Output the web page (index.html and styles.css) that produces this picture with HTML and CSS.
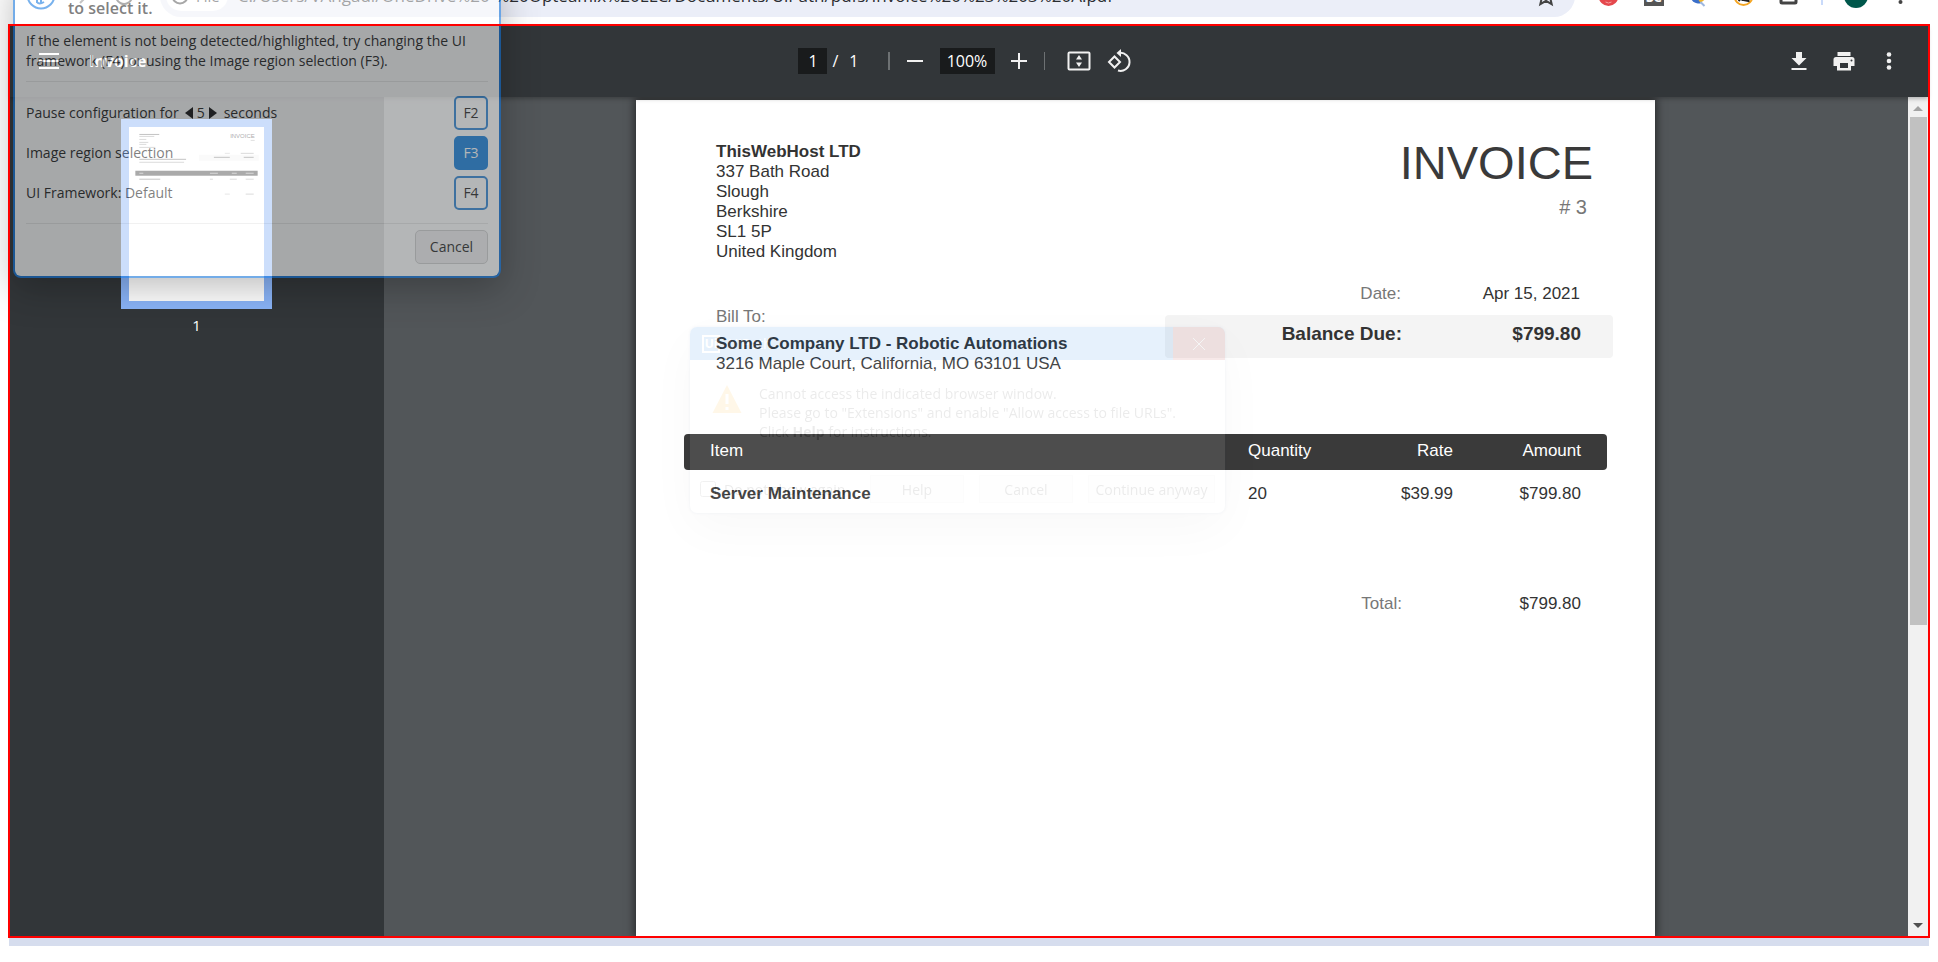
FILE: index.html
```html
<!DOCTYPE html>
<html lang="en">
<head>
<meta charset="utf-8">
<title>Invoice</title>
<link rel="stylesheet" href="styles.css">
</head>
<body>
<header class="browser">
  <div class="nav">
    <svg width="24" height="24" viewBox="0 0 24 24" fill="none" stroke="#777" stroke-width="2"><path d="M4 12h14M12 5l7 7-7 7"/></svg>
    <svg width="24" height="24" viewBox="0 0 24 24" fill="none" stroke="#444" stroke-width="2"><path d="M19 8a8 8 0 1 0 1 5M20 3v6h-6"/></svg>
  </div>
  <div class="omnibox">
    <span class="scheme"><svg width="20" height="20" viewBox="0 0 20 20" fill="none" stroke="#333" stroke-width="2"><circle cx="10" cy="10" r="7.5"/><path d="M10 9v5M10 5.500v1.500"/></svg>File</span>
    <span class="url">C:/Users/VAngadi/OneDrive%20-%20Opteamix%20LLC/Documents/UiPath/pdfs/Invoice%20%23%203%20A.pdf</span>
    <svg class="star" width="24" height="24" viewBox="0 0 24 24" fill="none" stroke="#444" stroke-width="2"><path d="M12 3l2.700 6 6.300.6-4.800 4.200 1.500 6.400-5.700-3.400-5.700 3.400 1.500-6.400L3 9.600 9.300 9z"/></svg>
  </div>
  <div class="extensions">
    <svg width="24" height="24" viewBox="0 0 24 24"><circle cx="12" cy="12" r="10" fill="#e5484d"/><path d="M9 18q3 2 6 0" stroke="#f4a0a0" fill="none"/></svg>
    <span class="se">Se</span>
    <svg width="24" height="24" viewBox="0 0 24 24"><path d="M4 12a8 8 0 0 0 11 7l-2-5z" fill="#3b6fc9"/><path d="M12 16l6-4 1 3-5 4z" fill="#f0b52c"/><path d="M14 18l4 4" stroke="#9db7e0" stroke-width="2"/></svg>
    <svg width="24" height="24" viewBox="0 0 24 24"><circle cx="12" cy="12" r="9" fill="#fff" stroke="#f5a623" stroke-width="2"/><path d="M7 17l4-4v4M12 16q2-4 5-1v2z" stroke="#222" stroke-width="2" fill="none"/></svg>
    <svg width="24" height="24" viewBox="0 0 24 24" fill="none" stroke="#444" stroke-width="3"><rect x="4.500" y="4" width="15" height="15" rx="1"/></svg>
    <i class="divider"></i>
    <span class="avatar">V</span>
    <svg width="24" height="24" viewBox="0 0 24 24" fill="#444"><circle cx="12" cy="6" r="2"/><circle cx="12" cy="12" r="2"/><circle cx="12" cy="18" r="2"/></svg>
  </div>
</header>

<main class="frame">
  <div class="toolbar">
    <div class="tb-left">
      <button class="icon" aria-label="Menu"><svg width="24" height="24" viewBox="0 0 24 24" stroke="#fff" stroke-width="2"><path d="M2 5h20M2 12h20M2 19h20"/></svg></button>
      <h1 class="doc-title">Invoice</h1>
    </div>
    <div class="tb-center">
      <input class="page-no" value="1" aria-label="Page number"><span class="slash">/</span><span class="total-pages">1</span>
      <i class="sep wide"></i>
      <button class="icon minus" aria-label="Zoom out"><svg width="24" height="24" viewBox="0 0 24 24" stroke="#f1f1f1" stroke-width="2"><path d="M4 12h16"/></svg></button>
      <input class="zoom" value="100%" aria-label="Zoom level">
      <button class="icon plus" aria-label="Zoom in"><svg width="24" height="24" viewBox="0 0 24 24" stroke="#f1f1f1" stroke-width="2"><path d="M4 12h16M12 4v16"/></svg></button>
      <i class="sep"></i>
      <button class="icon fit" aria-label="Fit to page"><svg width="24" height="24" viewBox="0 0 24 24" fill="none"><rect x="1.500" y="3.500" width="21" height="17" rx="1" stroke="#f1f1f1" stroke-width="2"/><path d="M9 10.500L12 6l3 4.500zM9 13.500L12 18l3-4.500z" fill="#f1f1f1"/></svg></button>
      <button class="icon rotate" aria-label="Rotate"><svg width="24" height="24" viewBox="0 0 24 24" fill="none" stroke="#f1f1f1" stroke-width="2"><path d="M7.500 7.500L13 13l-5.500 5.500L2 13z"/><path d="M12 4a9 9 0 1 1-1 17.500"/><path d="M14 0l-4.500 4L14 8z" fill="#f1f1f1" stroke="none"/></svg></button>
    </div>
    <div class="tb-right">
      <button class="icon" aria-label="Download"><svg width="24" height="24" viewBox="0 0 24 24" fill="#f1f1f1"><path d="M9 3h6v6h4.500L12 16.500 4.500 9H9zM4.500 19h15v2h-15z"/></svg></button>
      <button class="icon" aria-label="Print"><svg width="24" height="24" viewBox="0 0 24 24" fill="#f1f1f1"><path d="M5.500 3h13v4h-13z"/><path fill-rule="evenodd" d="M4 8h16a2.500 2.500 0 0 1 2.500 2.500V17H19v4.500H5V17H1.500v-6.500A2.500 2.500 0 0 1 4 8zM8 14v5h8v-5zM19.500 10.500a1 1 0 1 0 0 2 1 1 0 0 0 0-2z"/></svg></button>
      <button class="icon" aria-label="More actions"><svg width="24" height="24" viewBox="0 0 24 24" fill="#f1f1f1"><circle cx="12" cy="5.500" r="2.300"/><circle cx="12" cy="12" r="2.300"/><circle cx="12" cy="18.500" r="2.300"/></svg></button>
    </div>
  </div>

  <div class="viewer">
    <aside class="sidebar">
      <figure class="thumb">
        <svg class="thumb-page" viewBox="0 0 135 175" font-family="Liberation Sans, sans-serif">
          <rect width="135" height="175" fill="#fff"/>
          <g fill="#777"><rect x="10" y="7" width="20" height="1"/><rect x="10" y="9" width="15" height="1" opacity=".6"/><rect x="10" y="12" width="7" height="1" opacity=".6"/><rect x="10" y="15" width="9" height="1" opacity=".6"/><rect x="10" y="17" width="7" height="1" opacity=".6"/><rect x="10" y="20" width="16" height="1" opacity=".6"/><rect x="10" y="32" width="47" height="1"/><rect x="10" y="35" width="45" height="1" opacity=".6"/></g>
          <text x="126" y="11" font-size="6" text-anchor="end" fill="#3a3a3a">INVOICE</text>
          <rect x="70" y="28" width="60" height="6" fill="#f4f4f4"/>
          <g fill="#777"><rect x="122" y="13" width="4" height="1" opacity=".5"/><rect x="96" y="26" width="5" height="1" opacity=".4"/><rect x="112" y="26" width="13" height="1" opacity=".6"/><rect x="85" y="30" width="16" height="1"/><rect x="115" y="30" width="10" height="1"/></g>
          <rect x="6" y="44" width="123" height="5" fill="#3a3a3a"/>
          <g fill="#aaa"><rect x="10" y="46" width="4" height="1"/><rect x="81" y="46" width="8" height="1"/><rect x="103" y="46" width="5" height="1"/><rect x="117" y="46" width="8" height="1"/></g>
          <g fill="#777"><rect x="10" y="52" width="21" height="1"/><rect x="81" y="52" width="3" height="1" opacity=".6"/><rect x="101" y="52" width="7" height="1" opacity=".6"/><rect x="117" y="52" width="8" height="1" opacity=".6"/><rect x="96" y="67" width="5" height="1" opacity=".4"/><rect x="117" y="67" width="8" height="1" opacity=".6"/></g>
        </svg>
        <figcaption>1</figcaption>
      </figure>
    </aside>
    <section class="canvas">
      <article class="paper">
        <div class="top">
          <div class="parties">
            <address><b>ThisWebHost LTD</b><br>337 Bath Road<br>Slough<br>Berkshire<br>SL1 5P<br>United Kingdom</address>
            <p class="bill-label">Bill To:</p>
            <address><b>Some Company LTD - Robotic Automations</b><br>3216 Maple Court, California, MO 63101 USA</address>
          </div>
          <div class="summary">
            <h2>INVOICE</h2>
            <p class="number"># 3</p>
            <dl class="pair date"><dt>Date:</dt><dd>Apr 15, 2021</dd></dl>
            <dl class="pair balance"><dt>Balance Due:</dt><dd>$799.80</dd></dl>
          </div>
        </div>
        <table class="items">
          <thead><tr><th>Item</th><th class="qty">Quantity</th><th class="rate">Rate</th><th class="amount">Amount</th></tr></thead>
          <tbody><tr><td><b>Server Maintenance</b></td><td class="qty">20</td><td class="rate">$39.99</td><td class="amount">$799.80</td></tr></tbody>
        </table>
        <dl class="pair total"><dt>Total:</dt><dd>$799.80</dd></dl>
      </article>
    </section>
    <div class="scrollbar"><i class="up"></i><i class="handle"></i><i class="down"></i></div>
  </div>
</main>
<div class="taskbar"></div>

<section class="picker">
  <div class="picker-head">
    <svg width="30" height="30" viewBox="0 0 30 30" fill="none" stroke="#1478e0" stroke-width="2"><circle cx="15" cy="15" r="13.500"/><path d="M11 14v9M15 16v7M11 22q2 3 7 0"/></svg>
    <strong>to select it.</strong>
  </div>
  <p>If the element is not being detected/highlighted, try changing the UI<br>framework (F4) or using the Image region selection (F3).</p>
  <ul class="options">
    <li><span class="pause">Pause configuration for <i class="tri left"></i> 5 <i class="tri right"></i> <span>seconds</span></span><button>F2</button></li>
    <li><span>Image region selection</span><button class="active">F3</button></li>
    <li><span>UI Framework: Default</span><button>F4</button></li>
  </ul>
  <div class="picker-foot"><button class="cancel">Cancel</button></div>
</section>

<section class="notice">
  <div class="notice-head"><span class="logo">Ui</span><span class="notice-title">UiPath</span>
    <button class="close" aria-label="Close"><svg width="16" height="16" viewBox="0 0 16 16" stroke="#fff" stroke-width="1"><path d="M2 2l12 12M14 2L2 14"/></svg></button></div>
  <div class="notice-body">
    <svg width="30" height="30" viewBox="0 0 30 30"><path d="M15 1l14.500 28H.5z" fill="#ffab1a"/><path d="M13.500 10h3v10h-3zM13.500 23h3v3h-3z" fill="#fff"/></svg>
    <p>Cannot access the indicated browser window.<br>Please go to "Extensions" and enable "Allow access to file URLs".<br>Click <b>Help</b> for instructions.</p>
  </div>
  <div class="notice-foot"><label><input type="checkbox">Do not show again</label><button>Help</button><button>Cancel</button><button class="long">Continue anyway</button></div>
</section>
</body>
</html>
```
FILE: styles.css
```css
* { box-sizing: border-box; }
body {
  margin: 0;
  height: 100vh;
  position: relative;
  display: flex;
  flex-direction: column;
  padding: 0 8px 16px;
  overflow: hidden;
  background: #fff;
  color: #333;
  font: 14px/20px "Open Sans", "Noto Sans", sans-serif;
}
p, h1, h2, dl, dd, ul, figure { margin: 0; padding: 0; }
button, input { font: inherit; color: inherit; }
button { padding: 0; }
address { font-style: normal; }

/* Browser bar, clipped at the top of the window */
.browser {
  flex: none;
  height: 24px;
  padding: 0 7px 7px 60px;
  display: flex;
  align-items: flex-end;
  overflow: hidden;
  font-size: 17px;
}
.browser > div { flex: none; height: 42px; display: flex; align-items: center; }
.nav { width: 92px; gap: 20px; }
.browser .omnibox {
  flex: 1;
  min-width: 0;
  margin-right: 11px;
  padding: 0 17px 0 6px;
  border-radius: 21px;
  background: #ebeef8;
  color: #2a2c30;
}
.scheme {
  display: flex;
  align-items: center;
  gap: 6px;
  height: 30px;
  margin-right: 10px;
  padding: 0 8px 0 4px;
  border-radius: 15px;
  background: #fff;
  font-size: 15px;
}
.url { flex: 1; white-space: nowrap; overflow: hidden; }
.extensions > * { width: 45px; }
.extensions .se {
  width: 20px;
  height: 20px;
  margin: 0 12px 0 13px;
  background: #555;
  color: #fff;
  font-size: 14px;
  font-weight: 700;
  line-height: 22px;
  text-align: center;
}
.extensions .divider { width: 2px; height: 18px; margin: 0 10px; background: #c9dafa; }
.extensions .avatar {
  width: 24px;
  height: 24px;
  margin: 0 10px 0 11px;
  border-radius: 50%;
  background: #00574b;
  color: #fff;
  font-size: 12px;
  line-height: 24px;
  text-align: center;
}

/* PDF viewer */
.frame {
  position: relative;
  flex: 1;
  min-height: 0;
  padding: 2px;
  display: flex;
  flex-direction: column;
}
.frame::after {
  content: "";
  position: absolute;
  inset: 0;
  z-index: 5;
  border: 2px solid #f00;
  pointer-events: none;
}
.toolbar {
  position: relative;
  z-index: 1;
  flex: none;
  height: 71px;
  padding-bottom: 1px;
  display: grid;
  grid-template-columns: 1fr auto 1fr;
  align-items: center;
  background: #323639;
  color: #fff;
  font-size: 16px;
  box-shadow: 0 2px 4px rgba(0, 0, 0, .25);
}
.toolbar > div { display: flex; align-items: center; }
.icon { width: 24px; height: 24px; border: 0; background: none; }
.icon svg, .thumb-page { display: block; }
.tb-left { padding-left: 27px; gap: 28px; }
.doc-title { font-size: 16px; font-weight: 700; line-height: 24px; }
.page-no, .zoom {
  height: 26px;
  border: 0;
  padding: 0;
  background: #191b1c;
  text-align: center;
}
.page-no { width: 29px; }
.zoom { width: 55px; margin: 0 12px 0 13px; }
.slash { margin: 0 11px 0 5px; }
.total-pages { margin-right: 29px; }
.sep { width: 1px; height: 18px; background: #6d7173; }
.sep.wide { width: 2px; margin-right: 13px; }
.plus { margin-right: 13px; }
.fit { margin: 0 16px 0 22px; }
.rotate { margin-right: 9px; }
.tb-right { justify-content: flex-end; gap: 21px; padding-right: 27px; }

.viewer {
  flex: 1;
  min-height: 0;
  display: grid;
  grid-template-columns: 374px 1fr 20px;
  background: #525659;
}
.sidebar { padding: 22px 1px 0 0; background: #323639; color: #fff; }
.thumb { width: 151px; margin: 0 auto; text-align: center; }
.thumb-page { width: 151px; height: 190px; border: 8px solid #8ab4f8; background: #fff; }
.thumb figcaption { margin-top: 6px; font-size: 15px; }
.canvas { padding: 3px 17px 0 16px; overflow: hidden; display: flex; justify-content: center; }
.scrollbar { display: flex; flex-direction: column; align-items: center; padding: 9px 0 8px; background: #f1f1f1; }
.up, .down { border: 5px solid transparent; border-top: 0; border-bottom: 5px solid #a3a3a3; }
.down { margin-top: auto; border-top: 5px solid #505050; border-bottom: 0; }
.handle { width: 17px; height: 508px; max-height: 80%; margin-top: 6px; background: #c1c1c1; }

/* Invoice page */
.paper {
  width: 1019px;
  background: #fff;
  box-shadow: 0 0 8px 2px rgba(0, 0, 0, .5);
  color: #333;
  font: 17px/20px "Liberation Sans", Arial, sans-serif;
}
.top { display: flex; justify-content: space-between; padding: 35px 42px 0 80px; }
.parties { padding-top: 7px; }
.bill-label { margin: 45px 0 7px; color: #777; }
.summary { width: 448px; text-align: right; }
.summary h2 { padding-right: 20px; font-size: 47px; font-weight: 400; line-height: 56px; color: #3a3a3a; }
.number { margin-top: 4px; padding-right: 26px; font-size: 20px; line-height: 24px; color: #777; }
.pair { display: grid; grid-template-columns: 1fr 179px; text-align: right; }
.pair dt { color: #777; }
.date { margin-top: 65px; padding-right: 33px; }
.balance {
  margin-top: 11px;
  padding: 7px 32px 12px 0;
  border-radius: 4px;
  background: #f4f4f4;
  font-size: 19px;
  font-weight: 700;
  line-height: 24px;
}
.balance dt { color: #333; }
.items { width: 923px; margin: 60px auto 0; border-collapse: collapse; table-layout: fixed; }
.items th, .items td { padding: 0; font-weight: 400; text-align: left; }
.items th { height: 36px; padding-bottom: 2px; background: #3a3a3a; color: #fff; }
.items td { height: 48px; }
.items th:first-child, .items td:first-child { padding-left: 26px; }
.items th:first-child { border-radius: 4px 0 0 4px; }
.items th:last-child { border-radius: 0 4px 4px 0; }
.items .qty { width: 100px; }
.items .rate { width: 105px; text-align: right; }
.items .amount { width: 154px; padding-right: 26px; text-align: right; }
.total { margin-top: 76px; padding-right: 74px; }

.taskbar { flex: none; height: 8px; margin: 0 1px; background: #d6ddee; }

/* Translucent element picker */
.picker {
  position: absolute;
  z-index: 3;
  top: -26px;
  left: 13px;
  width: 488px;
  padding: 0 11px 12px;
  border: 2px solid #0a6fd8;
  border-top: 0;
  border-radius: 8px;
  background: #fff;
  box-shadow: 0 10px 36px rgba(0, 0, 0, .45);
  opacity: .57;
  color: #222;
}
.picker-head { height: 52px; display: flex; align-items: flex-end; gap: 12px; padding-bottom: 6px; font-size: 16px; line-height: 24px; }
.picker-head svg { margin-bottom: 10px; }
.picker-head strong { font-weight: 600; }
.picker p { padding: 5px 0 10px; white-space: nowrap; }
.options {
  display: flex;
  flex-direction: column;
  gap: 6px;
  padding: 14px 0 13px;
  border: solid #e8e8e8;
  border-width: 1px 0;
  list-style: none;
}
.options li { display: flex; align-items: center; justify-content: space-between; }
.picker button { width: 34px; height: 34px; border: 2px solid #2f86d6; border-radius: 5px; background: none; }
.picker .active { background: #1580dc; border-color: #1580dc; color: #fff; }
.picker-foot { display: flex; justify-content: flex-end; padding-top: 6px; }
.picker .cancel { width: 73px; border: 1px solid #d0d0d0; background: #f0f0f0; }
.pause { display: flex; align-items: center; gap: 4px; }
.pause span { margin-left: 3px; }
.tri { border: 6px solid transparent; }
.tri.left { border-left: 0; border-right: 8px solid #111; margin-left: 2px; }
.tri.right { border-right: 0; border-left: 8px solid #111; }

/* Fading browser-access notice */
.notice {
  position: absolute;
  z-index: 3;
  top: 327px;
  left: 690px;
  width: 535px;
  border-radius: 7px;
  background: #fff;
  box-shadow: 0 16px 50px rgba(0, 0, 0, .3), 0 0 3px rgba(0, 80, 160, .6);
  opacity: .1;
  font-size: 14px;
  line-height: 19px;
}
.notice-head { height: 33px; display: flex; align-items: center; gap: 8px; padding-left: 12px; border-radius: 7px 7px 0 0; background: #0573e1; color: #fff; }
.logo { width: 18px; height: 18px; border: 2px solid #fff; font-size: 12px; font-weight: 700; line-height: 14px; text-align: center; }
.close { width: 52px; height: 33px; margin-left: auto; border: 0; border-radius: 0 7px 0 0; background: #a82020; }
.close svg { display: block; margin: auto; }
.notice-body { display: flex; gap: 17px; padding: 24px 22px 34px; }
.notice-body p { white-space: nowrap; }
.notice-foot { display: flex; align-items: center; gap: 15px; padding: 0 10px 10px; }
.notice-foot label { display: flex; align-items: center; gap: 8px; margin-right: auto; }
.notice-foot input { width: 16px; height: 16px; margin: 0; }
.notice-foot button { width: 94px; height: 28px; border: 1px solid #ddd; background: #f4f4f4; }
.notice-foot .long { width: 127px; }
```
